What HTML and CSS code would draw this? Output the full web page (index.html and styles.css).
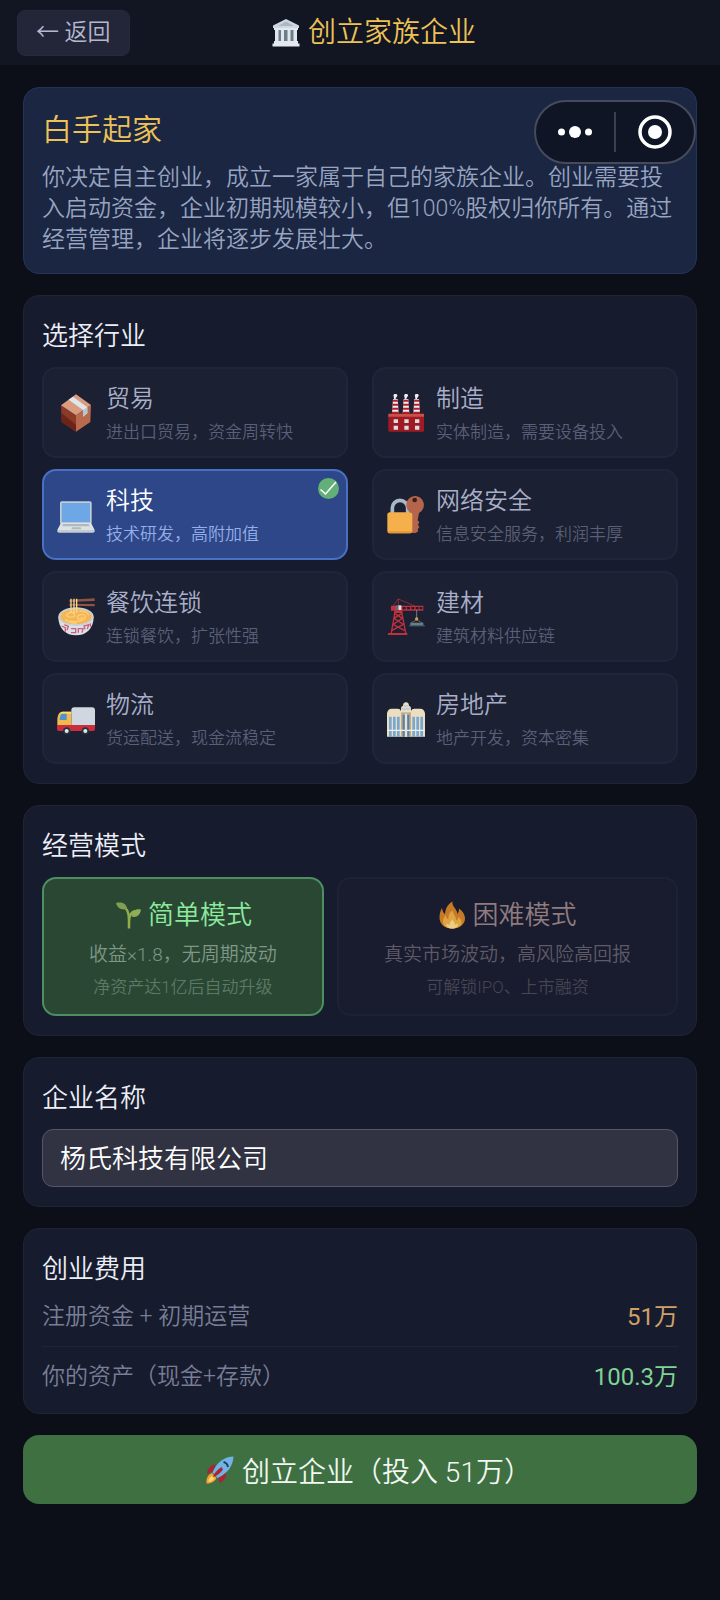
FILE: index.html
```html
<!DOCTYPE html>
<html lang="zh-CN">
<head>
<meta charset="utf-8">
<meta name="viewport" content="width=device-width, initial-scale=1">
<title>创立家族企业</title>
<link rel="stylesheet" href="styles.css">
</head>
<body>
<header class="topbar">
  <button class="back" type="button">← 返回</button>
  <h1 class="topbar-title">
    <svg class="glyph" viewBox="0 0 56 56" aria-hidden="true"><path fill="#cfd8e0" d="M28 0 54 13v5H2v-5z"/><path fill="#aab6c1" d="M28 5 44 14H12z"/><path fill="#e3e9ee" d="M4 18h48v4H4zM4 44h48v5H4zM1 49h54v6H1z"/><path fill="#6f7c89" d="M6 22h44v22H6z"/><path fill="#dfe6ec" d="M6 22h7v22H6zM18 22h6v22h-6zM31 22h6v22h-6zM43 22h7v22h-7z"/></svg>
    <span>创立家族企业</span>
  </h1>
</header>

<div class="capsule">
  <button class="capsule-btn" type="button" aria-label="更多"><svg viewBox="0 0 34 34" aria-hidden="true"><circle cx="3.5" cy="17" r="3.5"/><circle cx="17" cy="17" r="6"/><circle cx="30.5" cy="17" r="3.5"/></svg></button>
  <span class="capsule-line"></span>
  <button class="capsule-btn" type="button" aria-label="关闭"><svg viewBox="0 0 34 34" aria-hidden="true"><circle cx="17" cy="17" r="15" fill="none" stroke="#fff" stroke-width="3.5"/><circle cx="17" cy="17" r="7"/></svg></button>
</div>

<main class="page">
  <section class="card intro">
    <h2 class="intro-title">白手起家</h2>
    <p class="intro-text">你决定自主创业，成立一家属于自己的家族企业。创业需要投入启动资金，企业初期规模较小，但100%股权归你所有。通过经营管理，企业将逐步发展壮大。</p>
  </section>

  <section class="card">
    <h2 class="card-title" id="industry">选择行业</h2>
    <div class="industries" role="radiogroup" aria-labelledby="industry">
      <label class="option">
        <input type="radio" name="industry">
        <svg class="option-icon" viewBox="0 0 114 114" aria-hidden="true"><path fill="#8a3a26" d="M12 34 57 64v49L14 84z"/><path fill="#6b2417" d="M14 58 57 92v21L14 84z"/><path fill="#b9694d" d="M57 64 102 33 100 84 57 113z"/><path fill="#da9c7f" d="M57 1 102 33 57 64 12 34z"/><path fill="#dfe5ea" d="M35 17 48 8 91 40v18l-13 10V48z"/><path fill="#b5c6d4" d="M78 48 91 40v18l-13 10z"/></svg>
        <span class="option-body"><span class="option-name">贸易</span><span class="option-note">进出口贸易，资金周转快</span></span>
      </label>
      <label class="option">
        <input type="radio" name="industry">
        <svg class="option-icon" viewBox="0 0 114 114" aria-hidden="true"><g fill="#eceff1"><path d="M20 2c3-4 12-3 11 3-1 4-5 5-5 10h-5c1-5-3-8-1-13zM52 2c3-4 12-3 11 3-1 4-5 5-5 10h-5c1-5-3-8-1-13zM84 2c3-4 12-3 11 3-1 4-5 5-5 10h-5c1-5-3-8-1-13z"/><path d="M18 15h14l3 43H15zM50 15h14l3 43H47zM82 15h14l3 43H79z"/></g><path fill="#b71c2c" d="M18 17h14l1 6H17zM17 29h17v6H16zM16 41h18l1 6H15zM15 53h20v6H15zM50 17h14l1 6H49zM49 29h17v6H48zM48 41h18l1 6H47zM47 53h20v6H47zM82 17h14l1 6H81zM81 29h17v6H80zM80 41h18l1 6H79zM79 53h20v6H79z"/><rect x="4" y="58" width="107" height="55" rx="4" fill="#9e1b25"/><path fill="#c65345" d="M4 60h107v8H4z"/><path fill="#dadde2" d="M20 76h13v11H20zM52 76h13v11H52zM84 76h13v11H84zM20 95h13v12H20zM52 95h13v12H52zM84 95h13v12H84z"/></svg>
        <span class="option-body"><span class="option-name">制造</span><span class="option-note">实体制造，需要设备投入</span></span>
      </label>
      <label class="option">
        <input type="radio" name="industry" checked>
        <svg class="option-icon" viewBox="0 0 114 114" aria-hidden="true"><rect x="9" y="16" width="95" height="68" rx="5" fill="#c3ccd0"/><path fill="#6ea7e6" d="M14 21h85v58H14z"/><path fill="#dde3e5" d="M12 80h90l11 22H1z"/><path fill="#aebabf" d="M18 84h77l3 7H15zM45 94h26l2 6H43z"/><path fill="#c3ccd0" d="M1 102h112v4q-1 4-5 4H6q-5 0-5-4z"/></svg>
        <span class="option-body"><span class="option-name">科技</span><span class="option-note">技术研发，高附加值</span></span>
        <svg class="option-check" viewBox="0 0 42 42" aria-hidden="true"><circle cx="21" cy="21" r="21" fill="#62b077"/><path d="M5 23l10 9L36 8" fill="none" stroke="#fff" stroke-width="3"/></svg>
      </label>
      <label class="option">
        <input type="radio" name="industry">
        <svg class="option-icon" viewBox="0 0 114 114" aria-hidden="true"><path d="M16 58V36a23 23 0 0 1 46 0v22" fill="none" stroke="#a9b9c5" stroke-width="11"/><path fill="#b5654b" d="M83 0a27 27 0 0 1 13 51l-4 22 5 6-4 7 4 8-5 6 2 6-8 5H75V52A27 27 0 0 1 83 0z"/><circle cx="83" cy="12" r="7" fill="#35201f"/><rect x="1" y="49" width="75" height="63" rx="8" fill="#f5b04b"/><path fill="#e89a3a" d="M3 105h71q-2 7-6 7H9q-5 0-6-7z"/></svg>
        <span class="option-body"><span class="option-name">网络安全</span><span class="option-note">信息安全服务，利润丰厚</span></span>
      </label>
      <label class="option">
        <input type="radio" name="industry">
        <svg class="option-icon" viewBox="0 0 114 114" aria-hidden="true"><path fill="#8d5345" d="M37 5 113 1v8L37 12zM37 17l76 1v7l-76-2z"/><path fill="#dce1e8" d="M4 56h106c0 35-22 56-53 56S4 91 4 56z"/><path d="M14 84l11 5v12M22 80l12 5-4 12M42 92h14v12H42M64 104V92h14l-3 12M84 94l-3-10 14-4-4 13M100 86V76" fill="none" stroke="#cc6078" stroke-width="4"/><ellipse cx="57" cy="56" rx="53" ry="28" fill="#c9d0d7"/><ellipse cx="57" cy="56" rx="47" ry="23" fill="#f5b557"/><path d="M27 53c8-14 27-12 26-2s-22 7-24 0M40 69c22 6 48-4 45-14s-23-5-24 2 14 8 16 0M24 64c14 9 20 12 35 12M67 39c17 0 26 6 28 13" fill="none" stroke="#fbd078" stroke-width="4"/><path d="M42 2v43M51 2v47M59 2v42" fill="none" stroke="#f7d98a" stroke-width="4"/></svg>
        <span class="option-body"><span class="option-name">餐饮连锁</span><span class="option-note">连锁餐饮，扩张性强</span></span>
      </label>
      <label class="option">
        <input type="radio" name="industry">
        <svg class="option-icon" viewBox="0 0 114 114" aria-hidden="true"><path d="M34 2 14 30M34 3l56 24M34 2v24" fill="none" stroke="#c0303d" stroke-width="2"/><path d="M25 36 12 110M43 36l14 74M23 46l23 15-28 18 34 18M45 46 21 61l28 18-34 18" fill="none" stroke="#c2303c" stroke-width="4"/><path fill="#c2303c" d="M3 105h58v6H3zM12 23h97v15H12z"/><path fill="#1b2033" d="M47 27h9v7h-9zM60 27h9v7h-9zM73 27h9v7h-9zM86 27h9v7h-9zM98 27h8v7h-8z"/><path fill="#c2303c" d="M22 38h24v7H22z"/><path fill="#dce1e6" d="M34 22h9v14h-9z"/><path fill="#5e6e7b" d="M26 22h8v14h-8z"/><path d="M89 36v26" stroke="#9aa2ac" stroke-width="2"/><circle cx="89" cy="63" r="5" fill="#e3a04a"/><path d="M72 75l17-10 17 10" fill="none" stroke="#97854f" stroke-width="2"/><path fill="#65808c" d="M70 74h39v10H70z"/><path fill="#46606c" d="M67 81h46v4H67z"/></svg>
        <span class="option-body"><span class="option-name">建材</span><span class="option-note">建筑材料供应链</span></span>
      </label>
      <label class="option">
        <input type="radio" name="industry">
        <svg class="option-icon" viewBox="0 0 114 114" aria-hidden="true"><path fill="#cfd8e0" d="M52 22h53q9 0 9 9v51H43V31q0-9 9-9z"/><path fill="#f2b94f" d="M16 35h27v42H1V62c0-14 4-27 15-27z"/><path fill="#ffd774" d="M16 35h27v6H9q3-6 7-6z"/><path fill="#4f93ce" d="M16 41h13v19H8c0-8 3-19 8-19z"/><path fill="#cb2d3d" d="M0 75h114v11q0 7-8 7H8q-8 0-8-7z"/><circle cx="29" cy="93" r="11" fill="#26323d"/><circle cx="85" cy="93" r="11" fill="#26323d"/><circle cx="29" cy="93" r="6" fill="#e0e6ea"/><circle cx="85" cy="93" r="6" fill="#e0e6ea"/></svg>
        <span class="option-body"><span class="option-name">物流</span><span class="option-note">货运配送，现金流稳定</span></span>
      </label>
      <label class="option">
        <input type="radio" name="industry">
        <svg class="option-icon" viewBox="0 0 114 114" aria-hidden="true"><path fill="#ecdfbf" d="M0 40q2-14 14-14h18q8 0 10 7V25q0-6 6-8 1-10 9-10t9 10q6 2 6 8v8q2-7 10-7h18q12 0 14 14v70H0z"/><path fill="#c3ccd6" d="M43 23h28v7H43zM50 15h14v5H50z"/><path fill="#bfae8c" d="M42 37h30v73H42z"/><path fill="#77a7d3" d="M6 50h8v60H6zM18 50h8v60h-8zM30 50h8v60h-8zM76 50h8v60h-8zM88 50h8v60h-8zM100 50h8v60h-8z"/><path fill="#5a7fa5" d="M47 44h6v66h-6zM61 44h6v66h-6z"/><path fill="#eef0ee" d="M0 89h114v4H0z"/><path fill="#dfe3e6" d="M54 41h6v69h-6z"/></svg>
        <span class="option-body"><span class="option-name">房地产</span><span class="option-note">地产开发，资本密集</span></span>
      </label>
    </div>
  </section>

  <section class="card">
    <h2 class="card-title" id="mode">经营模式</h2>
    <div class="modes" role="radiogroup" aria-labelledby="mode">
      <label class="mode mode-easy">
        <input type="radio" name="mode" checked>
        <span class="mode-name">
          <svg class="glyph" viewBox="0 0 56 56" aria-hidden="true"><path d="M30 55V38C30 22 26 13 16 8M30 42c0-12 4-20 12-22" fill="none" stroke="#93ad4c" stroke-width="5"/><path fill="#7fa052" d="M4 4c14-3 21 2 22 12C14 19 7 14 4 4z"/><path fill="#8fae55" d="M54 17c-2 12-9 17-19 14 1-11 8-16 19-14z"/></svg>
          <span>简单模式</span>
        </span>
        <span class="mode-line">收益×1.8，无周期波动</span>
        <span class="mode-hint">净资产达1亿后自动升级</span>
      </label>
      <label class="mode mode-hard">
        <input type="radio" name="mode">
        <span class="mode-name">
          <svg class="glyph" viewBox="0 0 56 56" aria-hidden="true"><path fill="#c77a26" d="M28 55C13 55 3 46 3 33c0-8 2-14 5-19 1 7 3 10 6 12C15 14 20 6 29 1c-2 10 9 14 10 25 2-3 3-6 3-11 8 6 12 13 12 20 0 12-11 20-26 20z"/><path fill="#dfa544" d="M28 55c-11 0-19-6-18-16 1-5 3-8 6-10 0 4 2 7 5 8-1-9 4-16 9-18-1 8 7 11 6 20 3-1 4-4 5-7 5 4 7 9 6 13-2 7-9 10-19 10z"/><path fill="#ecce87" d="M28 55c-7 0-12-4-11-9l6 2c0-5 3-8 6-11 1 4 5 6 5 11l6-3c0 6-5 10-12 10z"/></svg>
          <span>困难模式</span>
        </span>
        <span class="mode-line">真实市场波动，高风险高回报</span>
        <span class="mode-hint">可解锁IPO、上市融资</span>
      </label>
    </div>
  </section>

  <section class="card">
    <h2 class="card-title"><label for="company">企业名称</label></h2>
    <input class="field" id="company" type="text" value="杨氏科技有限公司">
  </section>

  <section class="card costs">
    <h2 class="card-title">创业费用</h2>
    <dl class="rows">
      <div class="row"><dt>注册资金 + 初期运营</dt><dd class="cost">51万</dd></div>
      <div class="row"><dt>你的资产（现金+存款）</dt><dd class="asset">100.3万</dd></div>
    </dl>
  </section>

  <button class="submit" type="button">
    <svg class="glyph" viewBox="0 0 56 56" aria-hidden="true"><path fill="#f6a13b" d="M12 34c-9 4-12 12-11 21 9 0 16-3 20-11z"/><path fill="#ffd76a" d="M11 40c-5 4-6 8-6 12 5-1 9-3 12-7z"/><path fill="#a92435" d="M20 17C9 17 3 25 2 36l12-5zM40 33c1 10-4 17-13 22l-2-12z"/><path fill="#72b3e6" d="M55 1C37 1 21 13 13 33l10 11C43 35 54 20 55 1z"/><path fill="#a92435" d="M31 22c-9 5-15 13-17 20 8-2 15-8 20-15z"/><path d="M35 12c5 1 8 5 9 10" fill="none" stroke="#1f3e63" stroke-width="4"/></svg>
    <span>创立企业（投入 51万）</span>
  </button>
</main>
</body>
</html>
```

FILE: styles.css
```css
* {
  box-sizing: border-box;
}

body {
  margin: 0;
  min-height: 100vh;
  background: #0c0e18;
  color: #eceef6;
  font-family: Roboto, "Noto Sans CJK SC", sans-serif;
  font-weight: 350;
}

h1,
h2,
p,
dl,
dd {
  margin: 0;
  font-weight: inherit;
}

button,
input {
  font: inherit;
}

.glyph {
  flex: none;
  width: 28px;
  height: 28px;
}

.topbar {
  display: grid;
  grid-template-columns: 1fr auto 1fr;
  align-items: center;
  height: 65px;
  padding: 0 17px;
  background: #121522;
}

.back {
  justify-self: start;
  height: 46px;
  padding: 0 18px;
  border: 1px solid #282a3c;
  border-radius: 8px;
  background: #232538;
  color: #b3b8cf;
  font-size: 23px;
  line-height: 32px;
}

.topbar-title {
  display: flex;
  align-items: center;
  gap: 8px;
  grid-column: 2;
  margin-left: 28px;
  color: #edc257;
  font-size: 28px;
  line-height: 40px;
}

.capsule {
  position: absolute;
  top: 100px;
  right: 24px;
  display: flex;
  align-items: center;
  width: 162px;
  height: 64px;
  border: 2px solid #454b5b;
  border-radius: 32px;
  background: #0f1524;
}

.capsule-btn {
  flex: 1;
  display: flex;
  justify-content: center;
  padding: 0;
  border: 0;
  background: none;
}

.capsule-btn svg {
  width: 34px;
  height: 34px;
  fill: #fff;
}

.capsule-line {
  width: 2px;
  height: 40px;
  background: #3b4050;
}

.page {
  display: flex;
  flex-direction: column;
  gap: 21px;
  padding: 22px 23px 40px;
}

.card {
  padding: 22px 18px 19px;
  border: 1px solid #1f2436;
  border-radius: 16px;
  background: #161b2d;
}

.card-title {
  margin-bottom: 13px;
  font-size: 26px;
  line-height: 36px;
}

.intro {
  padding-bottom: 18px;
  border-color: #243459;
  background: #1a2642;
}

.intro-title {
  margin-bottom: 12px;
  color: #edc257;
  font-size: 30px;
  line-height: 40px;
}

.intro-text {
  color: #98a4c0;
  font-size: 23px;
  line-height: 31px;
}

.industries {
  display: grid;
  grid-template-columns: 1fr 1fr;
  gap: 11px 24px;
}

.option,
.mode {
  position: relative;
  display: flex;
  border: 2px solid #20263a;
  border-radius: 14px;
}

.option {
  align-items: center;
  gap: 11px;
  padding: 12px 13px;
  background: #1b2033;
}

.option input,
.mode input {
  position: absolute;
  inset: 0;
  margin: 0;
  opacity: 0;
}

.option-icon {
  flex: none;
  width: 38px;
  height: 38px;
}

.option-body {
  display: flex;
  flex-direction: column;
  gap: 3px;
}

.option-name {
  color: #a9afc8;
  font-size: 24px;
  line-height: 36px;
}

.option-note {
  color: #595f76;
  font-size: 17px;
  line-height: 24px;
}

.option:has(input:checked) {
  border-color: #4a70c4;
  background: #2d4789;
}

.option:has(input:checked) .option-name {
  color: #fff;
}

.option:has(input:checked) .option-note {
  color: #96aee8;
}

.option-check {
  position: absolute;
  top: 7px;
  right: 7px;
  width: 21px;
  height: 21px;
}

.modes {
  display: flex;
  gap: 13px;
}

.mode {
  flex: 1 1 auto;
  flex-direction: column;
  align-items: center;
  padding: 18px 0 15px;
  text-align: center;
}

.mode-name {
  display: flex;
  align-items: center;
  gap: 6px;
  margin-bottom: 9px;
  font-size: 26px;
  line-height: 36px;
}

.mode-line {
  margin-bottom: 7px;
  font-size: 19px;
  line-height: 26px;
}

.mode-hint {
  font-size: 17px;
  line-height: 24px;
}

.mode-easy {
  border-color: #4d8f60;
  background: #2a4733;
}

.mode-easy .mode-name {
  color: #8bea9d;
}

.mode-easy .mode-line {
  color: #7f9787;
}

.mode-easy .mode-hint {
  color: #5d7866;
}

.mode-hard {
  border-color: #1d2234;
  background: #181c2e;
}

.mode-hard .mode-name {
  color: #907b7e;
}

.mode-hard .mode-line {
  color: #5f5a67;
}

.mode-hard .mode-hint {
  color: #464553;
}

.field {
  display: block;
  width: 100%;
  height: 58px;
  padding: 0 17px 4px;
  border: 1px solid #555768;
  border-radius: 11px;
  background: #313342;
  color: #fff;
  font-size: 26px;
}

.costs {
  padding-bottom: 7px;
}

.costs .card-title {
  margin-bottom: 0;
}

.row {
  display: flex;
  align-items: center;
  justify-content: space-between;
  height: 59px;
  padding-bottom: 5px;
  color: #787e96;
  font-size: 23px;
}

.row + .row {
  height: 60px;
  border-top: 1px solid #1f2436;
}

.row dd {
  font-size: 24px;
  font-weight: 400;
}

.row .cost {
  color: #d0a067;
}

.row .asset {
  color: #7fd493;
}

.submit {
  display: flex;
  align-items: center;
  justify-content: center;
  gap: 8px;
  height: 69px;
  padding: 0 0 0 18px;
  border: 0;
  border-radius: 16px;
  background: #3e7042;
  color: #f2f7f2;
  font-size: 28px;
}
```
